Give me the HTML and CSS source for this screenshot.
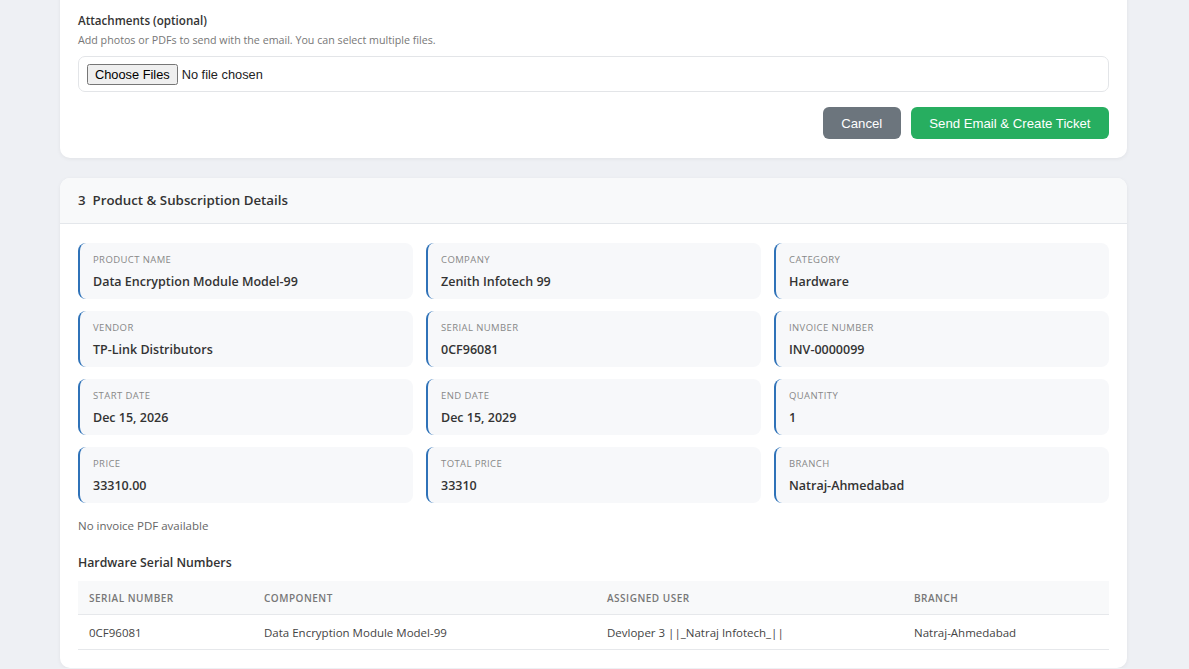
FILE: index.html
```html
<!DOCTYPE html>
<html lang="en">
<head>
    <meta charset="UTF-8">
    <meta name="viewport" content="width=device-width, initial-scale=1.0">
    <title>Product Ticket</title>
    <link rel="stylesheet" href="styles.css">
</head>
<body>
    <div class="page">
        <!-- Email form (scrolled, only the bottom part visible) -->
        <div class="panel panel-form">
            <div class="form-group">
                <label class="form-label" for="attachments">Attachments (optional)</label>
                <div class="form-help">Add photos or PDFs to send with the email. You can select multiple files.</div>
                <div class="file-box">
                    <input type="file" id="attachments" class="file-input" multiple>
                </div>
            </div>
            <div class="form-actions">
                <button class="btn btn-cancel">Cancel</button>
                <button class="btn btn-send">Send Email &amp; Create Ticket</button>
            </div>
        </div>

        <!-- Product details -->
        <div class="panel">
            <div class="panel-header">3&nbsp;&nbsp;Product &amp; Subscription Details</div>
            <div class="panel-body">
                <div class="detail-grid">
                    <div class="detail-item">
                        <div class="detail-label">Product Name</div>
                        <div class="detail-value">Data Encryption Module Model-99</div>
                    </div>
                    <div class="detail-item">
                        <div class="detail-label">Company</div>
                        <div class="detail-value">Zenith Infotech 99</div>
                    </div>
                    <div class="detail-item">
                        <div class="detail-label">Category</div>
                        <div class="detail-value">Hardware</div>
                    </div>
                    <div class="detail-item">
                        <div class="detail-label">Vendor</div>
                        <div class="detail-value">TP-Link Distributors</div>
                    </div>
                    <div class="detail-item">
                        <div class="detail-label">Serial Number</div>
                        <div class="detail-value">0CF96081</div>
                    </div>
                    <div class="detail-item">
                        <div class="detail-label">Invoice Number</div>
                        <div class="detail-value">INV-0000099</div>
                    </div>
                    <div class="detail-item">
                        <div class="detail-label">Start Date</div>
                        <div class="detail-value">Dec 15, 2026</div>
                    </div>
                    <div class="detail-item">
                        <div class="detail-label">End Date</div>
                        <div class="detail-value">Dec 15, 2029</div>
                    </div>
                    <div class="detail-item">
                        <div class="detail-label">Quantity</div>
                        <div class="detail-value">1</div>
                    </div>
                    <div class="detail-item">
                        <div class="detail-label">Price</div>
                        <div class="detail-value">33310.00</div>
                    </div>
                    <div class="detail-item">
                        <div class="detail-label">Total Price</div>
                        <div class="detail-value">33310</div>
                    </div>
                    <div class="detail-item">
                        <div class="detail-label">Branch</div>
                        <div class="detail-value">Natraj-Ahmedabad</div>
                    </div>
                </div>

                <p class="no-invoice">No invoice PDF available</p>

                <h4 class="sub-title">Hardware Serial Numbers</h4>
                <table class="serial-table">
                    <thead>
                        <tr>
                            <th class="col-serial">Serial Number</th>
                            <th class="col-component">Component</th>
                            <th class="col-user">Assigned User</th>
                            <th>Branch</th>
                        </tr>
                    </thead>
                    <tbody>
                        <tr>
                            <td>0CF96081</td>
                            <td>Data Encryption Module Model-99</td>
                            <td>Devloper 3 ||_Natraj Infotech_||</td>
                            <td>Natraj-Ahmedabad</td>
                        </tr>
                    </tbody>
                </table>
            </div>
        </div>
    </div>
</body>
</html>
```

FILE: styles.css
```css
body {
    margin: 0;
    background-color: #eef0f4;
    font-family: "Open Sans", "Noto Sans", sans-serif;
    color: #333;
    overflow: hidden;
}

.page {
    width: 1067px;
    margin: 0 auto 0 60px;
    display: flex;
    flex-direction: column;
    gap: 20px;
}

.panel {
    background: #fff;
    border-radius: 10px;
    box-shadow: 0 1px 4px rgba(0, 0, 0, 0.06);
    overflow: hidden;
}

.panel-form {
    margin-top: -37px;
    padding: 50px 18px 19px;
    border-radius: 0 0 10px 10px;
}

.form-label {
    display: block;
    font-size: 11.6px;
    font-weight: 600;
    color: #333;
    margin-bottom: 5px;
}

.form-help {
    font-size: 10.7px;
    color: #777;
    margin-bottom: 9px;
}

.file-box {
    border: 1px solid #e3e5e8;
    border-radius: 7px;
    padding: 8px 8px;
    height: 18px;
    display: flex;
    align-items: center;
}

.file-input {
    font-family: "Liberation Sans", Arial, sans-serif;
    font-size: 12.8px;
    color: #222;
}

.form-actions {
    display: flex;
    justify-content: flex-end;
    gap: 10px;
    margin-top: 15px;
}

.btn {
    height: 32px;
    padding: 0 18.5px;
    border: none;
    border-radius: 6px;
    color: #fff;
    font-family: "Liberation Sans", Arial, sans-serif;
    font-size: 13.2px;
    cursor: pointer;
}

.btn-cancel {
    background-color: #6c757d;
}

.btn-send {
    background-color: #27ae60;
}

.panel-header {
    background-color: #f8f9fa;
    border-bottom: 1px solid #e4e7eb;
    height: 45px;
    line-height: 45px;
    padding: 0 18px;
    font-size: 13.3px;
    font-weight: 600;
    color: #333;
}

.panel-body {
    padding: 19px 18px 18px;
}

.detail-grid {
    display: grid;
    grid-template-columns: repeat(3, 1fr);
    gap: 12px 13px;
}

.detail-item {
    height: 56px;
    box-sizing: border-box;
    background-color: #f7f8fa;
    border-left: 2px solid #2f72b8;
    border-radius: 8px;
    padding: 10px 13px;
}

.detail-label {
    font-size: 9.5px;
    letter-spacing: 0.4px;
    text-transform: uppercase;
    color: #888;
    margin-bottom: 7px;
}

.detail-value {
    font-size: 12.5px;
    font-weight: 600;
    color: #333;
}

.no-invoice {
    font-size: 11.5px;
    color: #666;
    margin: 15px 0 0;
}

.sub-title {
    font-size: 12.3px;
    font-weight: 600;
    color: #333;
    margin: 21px 0 10px;
}

.serial-table {
    width: 100%;
    border-collapse: collapse;
}

.serial-table th,
.serial-table td {
    text-align: left;
    padding: 0 11px;
    border-bottom: 1px solid #e6e8eb;
}

.serial-table th {
    background-color: #f8f9fa;
    height: 33px;
    font-size: 10px;
    font-weight: 600;
    letter-spacing: 0.5px;
    text-transform: uppercase;
    color: #777;
}

.serial-table td {
    height: 34px;
    font-size: 11.5px;
    color: #444;
}

.col-serial {
    width: 153px;
}

.col-component {
    width: 321px;
}

.col-user {
    width: 285px;
}
```
